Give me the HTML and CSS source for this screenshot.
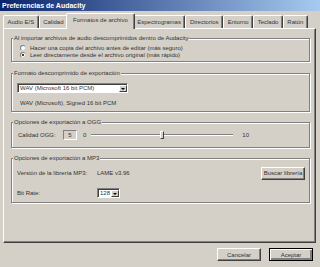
FILE: index.html
```html
<!doctype html>
<html>
    <head>
        <link rel="stylesheet" href="styles.css">
    </head>
    <body>
        <div class="titlebar">Preferencias de Audacity</div>

        <div class="tabs">
            <span class="tab">Audio E/S</span>
            <span class="tab">Calidad</span>
            <span class="tab active">Formatos de archivo</span>
            <span class="tab">Espectrogramas</span>
            <span class="tab">Directorios</span>
            <span class="tab">Entorno</span>
            <span class="tab">Teclado</span>
            <span class="tab">Ratón</span>
        </div>

        <div class="panel">
            <fieldset class="group group-import">
                <legend>Al importar archivos de audio descomprimidos dentro de Audacity</legend>
                <div class="radio-row"><span class="radio"></span>Hacer una copia del archivo antes de editar (más seguro)</div>
                <div class="radio-row"><span class="radio checked"></span>Leer directamente desde el archivo original (más rápido)</div>
            </fieldset>

            <fieldset class="group group-format">
                <legend>Formato descomprimido de exportación</legend>
                <div class="combo combo-wide">
                    <span class="combo-text">WAV (Microsoft 16 bit PCM)</span>
                    <span class="combo-arrow"></span>
                </div>
                <div class="format-info">WAV (Microsoft), Signed 16 bit PCM</div>
            </fieldset>

            <fieldset class="group group-ogg">
                <legend>Opciones de exportación a OGG</legend>
                <div class="ogg-row">
                    <span class="ogg-label">Calidad OGG:</span>
                    <span class="quality-box">5</span>
                    <span class="tick-min">0</span>
                    <span class="slider">
                        <span class="slider-track"></span>
                        <span class="slider-thumb" style="left: 50%"></span>
                    </span>
                    <span class="tick-max">10</span>
                </div>
            </fieldset>

            <fieldset class="group group-mp3">
                <legend>Opciones de exportación a MP3</legend>
                <div class="mp3-row">
                    <span class="field-label">Versión de la librería MP3:</span>
                    <span>LAME v3.96</span>
                    <span class="button find-lib">Buscar librería</span>
                </div>
                <div class="mp3-row bitrate-row">
                    <span class="field-label">Bit Rate:</span>
                    <div class="combo combo-small">
                        <span class="combo-text">128</span>
                        <span class="combo-arrow"></span>
                    </div>
                </div>
            </fieldset>
        </div>

        <div class="footer">
            <span class="button">Cancelar</span>
            <span class="button default">Aceptar</span>
        </div>
    </body>
</html>
```

FILE: styles.css
```css
* {
    box-sizing: border-box;
}
html {
    margin: 0;
}
body {
    margin: 0;
    width: 320px;
    height: 267px;
    overflow: hidden;
    background: #d4d0c8;
    font-family: "Liberation Sans", Arial, sans-serif;
    font-size: 6px;
    color: #333;
}

.titlebar {
    height: 11px;
    padding-left: 2px;
    line-height: 11px;
    font-size: 7px;
    font-weight: bold;
    color: #fff;
    background: linear-gradient(to right, #0a246a, #a6caf0);
}

/* tab strip */
.tabs {
    display: flex;
    align-items: flex-end;
    height: 17px;
    padding-left: 3px;
}
.tab {
    height: 13px;
    padding: 0 3.5px;
    line-height: 12px;
    white-space: nowrap;
    border: 1px solid #fff;
    border-bottom: none;
    border-right-color: #404040;
    border-radius: 2px 2px 0 0;
    box-shadow: inset -1px 0 0 #808080;
}
.tab.active {
    position: relative;
    z-index: 1;
    height: 16px;
    margin: 0 -2px -1px;
    padding: 0 6px;
    line-height: 13px;
    background: #d4d0c8;
}

.panel {
    height: 215px;
    margin: 0 4px 0 3px;
    padding: 5px 5px 0 7px;
    border: 1px solid #fff;
    border-right-color: #404040;
    border-bottom-color: #404040;
    box-shadow: inset -1px -1px 0 #808080;
}

/* etched group boxes */
.group {
    margin: 0;
    padding: 0 4px 0 5px;
    border: 1px solid #808080;
    box-shadow: inset 1px 1px 0 #fff, 1px 1px 0 #fff;
    min-width: 0;
}
.group legend {
    margin-left: -4px;
    padding: 0 1px;
    line-height: 8px;
    background: #d4d0c8;
}
.group-import {
    padding-bottom: 3px;
}
.group-format {
    margin-top: 7px;
    padding-bottom: 4px;
}
.group-ogg {
    margin-top: 6px;
    padding-bottom: 7px;
}
.group-mp3 {
    margin-top: 6px;
    padding-bottom: 4px;
}

.radio-row {
    display: flex;
    align-items: center;
    height: 7px;
    padding-left: 3px;
}
.radio-row:first-of-type {
    margin-top: 2px;
}
.radio {
    width: 6px;
    height: 6px;
    margin-right: 4px;
    border-radius: 50%;
    background: #fff;
    border: 1px solid #808080;
    border-right-color: #d4d0c8;
    border-bottom-color: #d4d0c8;
    display: flex;
    align-items: center;
    justify-content: center;
}
.radio.checked::after {
    content: "";
    width: 2px;
    height: 2px;
    border-radius: 50%;
    background: #000;
}

/* combo boxes */
.combo {
    display: flex;
    height: 10px;
    background: #fff;
    border: 1px solid #808080;
    border-right-color: #fff;
    border-bottom-color: #fff;
    box-shadow: inset 1px 1px 0 #404040;
}
.combo-text {
    flex: 1;
    padding-left: 2px;
    line-height: 8px;
    white-space: nowrap;
}
.combo-arrow {
    width: 8px;
    margin: 1px 0 0;
    background: #d4d0c8;
    border: 1px solid #fff;
    border-right-color: #404040;
    border-bottom-color: #404040;
    display: flex;
    align-items: center;
    justify-content: center;
}
.combo-arrow::after {
    content: "";
    border-left: 2px solid transparent;
    border-right: 2px solid transparent;
    border-top: 2px solid #000;
}
.combo-wide {
    width: 111px;
    margin-top: 6px;
}
.combo-small {
    width: 23px;
}
.format-info {
    margin-top: 6px;
    padding-left: 3px;
    line-height: 8px;
}

/* OGG quality */
.ogg-row {
    display: flex;
    align-items: center;
    height: 10px;
    margin-top: 4px;
    padding-left: 1px;
}
.ogg-label {
    width: 45px;
}
.quality-box {
    width: 14px;
    height: 10px;
    line-height: 8px;
    text-align: center;
    border: 1px solid #808080;
    border-right-color: #fff;
    border-bottom-color: #fff;
}
.tick-min {
    margin-left: 6px;
}
.slider {
    position: relative;
    width: 142px;
    height: 10px;
    margin-left: 5px;
}
.slider-track {
    position: absolute;
    left: 0;
    right: 0;
    top: 4px;
    height: 2px;
    border-top: 1px solid #808080;
    border-bottom: 1px solid #fff;
}
.slider-thumb {
    position: absolute;
    top: 1px;
    width: 4px;
    height: 8px;
    margin-left: -2px;
    background: #d4d0c8;
    border: 1px solid #fff;
    border-right-color: #404040;
    border-bottom-color: #404040;
}
.tick-max {
    margin-left: 9px;
}

/* MP3 options */
.mp3-row {
    display: flex;
    align-items: center;
    height: 12px;
    margin-top: 5px;
}
.bitrate-row {
    height: 10px;
    margin-top: 9px;
}
.field-label {
    width: 80px;
}
.find-lib {
    margin-left: auto;
    width: 49px;
    height: 12px;
}

.button {
    display: flex;
    align-items: center;
    justify-content: center;
    width: 44px;
    height: 13px;
    white-space: nowrap;
    border: 1px solid #fff;
    border-right-color: #404040;
    border-bottom-color: #404040;
    box-shadow: inset -1px -1px 0 #808080;
}
.button.default {
    border: 1px solid #000;
    box-shadow: inset 1px 1px 0 #fff, inset -2px -2px 0 #808080;
}

.footer {
    display: flex;
    justify-content: flex-end;
    gap: 8px;
    padding: 5px 7px 0 0;
}
```
